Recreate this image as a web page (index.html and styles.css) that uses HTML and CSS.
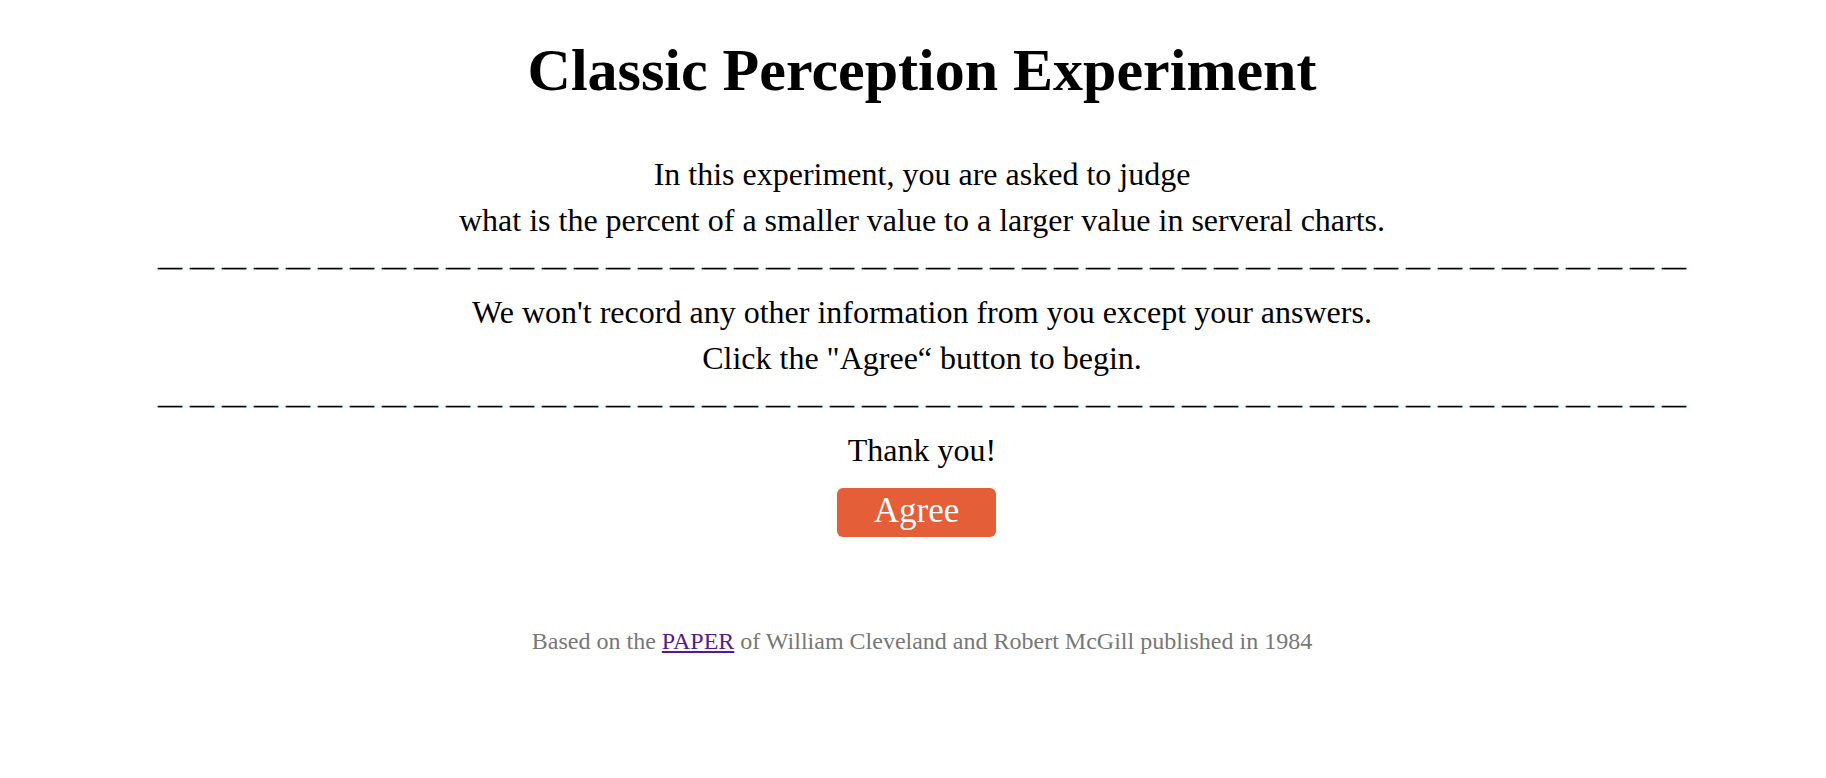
FILE: index.html
```html
<!DOCTYPE html>
<html lang="en">
<head>
<meta charset="utf-8">
<title>Classic Perception Experiment</title>
<link rel="stylesheet" href="styles.css">
</head>
<body>
<main class="page">
  <h1 class="title">Classic Perception Experiment</h1>
  <div class="intro">
    <p class="line">In this experiment, you are asked to judge</p>
    <p class="line">what is the percent of a smaller value to a larger value in serveral charts.</p>
    <p class="line divider"><span class="dashes">————————————————————————————————————————————————</span></p>
    <p class="line">We won't record any other information from you except your answers.</p>
    <p class="line">Click the "Agree“ button to begin.</p>
    <p class="line divider"><span class="dashes">————————————————————————————————————————————————</span></p>
    <p class="line">Thank you!</p>
  </div>
  <div class="agree-row">
    <button class="agree" type="button">Agree</button>
  </div>
  <p class="footer">Based on the <a class="paper-link" href="#">PAPER</a> of William Cleveland and Robert McGill published in 1984</p>
</main>
</body>
</html>
```
FILE: styles.css
```css
html, body {
  background: #ffffff;
}

body {
  margin: 8px 8px 8px 26px;
  font-family: "Liberation Serif", "Times New Roman", serif;
  color: #000000;
}

.page {
  display: flex;
  flex-direction: column;
  align-items: stretch;
  text-align: center;
}

.title {
  margin: 28px 0 0;
  font-size: 60px;
  font-weight: bold;
  line-height: 69px;
}

.intro {
  margin-top: 46px;
}

.line {
  margin: 0;
  font-size: 32px;
  line-height: 46px;
  white-space: nowrap;
}

.dashes {
  font-size: 24px;
  letter-spacing: 8px;
  padding-left: 8px;
  vertical-align: 3px;
  -webkit-text-stroke: 0.3px #000000;
}

.agree-row {
  display: flex;
  justify-content: center;
  padding-right: 11px;
  margin-top: 15px;
}

.agree {
  width: 159px;
  height: 49px;
  padding: 0 0 3px;
  border: none;
  border-radius: 6px;
  background: #e45e37;
  color: #ffffff;
  font-family: "Liberation Serif", "Times New Roman", serif;
  font-size: 35px;
  line-height: 46px;
  cursor: pointer;
}

.footer {
  margin: 90px 0 0;
  font-size: 24px;
  line-height: 28px;
  color: #777777;
}

.paper-link {
  color: #551a8b;
  text-decoration: underline;
}
```
